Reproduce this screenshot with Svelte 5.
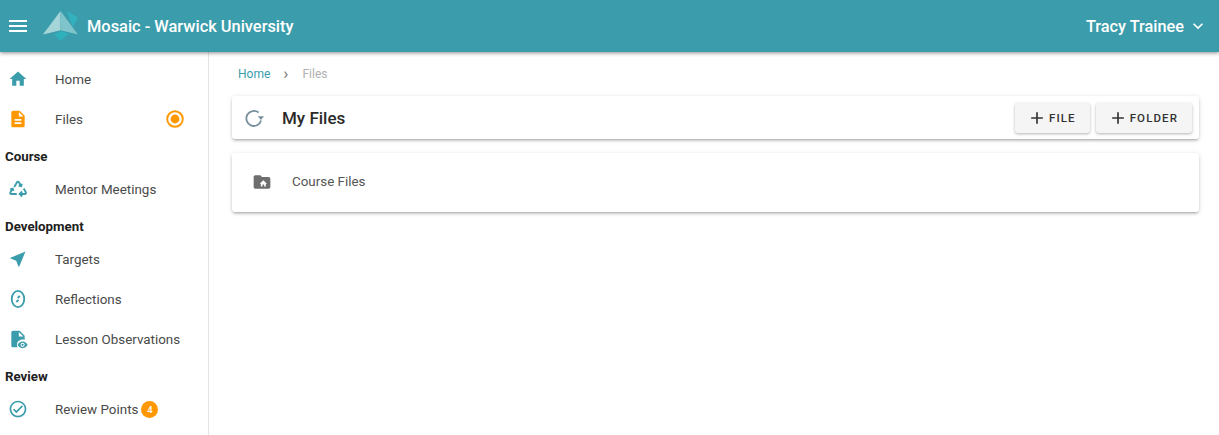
<script lang="ts">
  const icons = {
    home: 'M10 20v-6h4v6h5v-8h3L12 3 2 12h3v8z',
    file: 'M14 2H6c-1.1 0-2 .9-2 2v16c0 1.1.9 2 2 2h12c1.1 0 2-.9 2-2V8l-6-6zm2 16H8v-2h8v2zm0-4H8v-2h8v2zm-3-5V3.500L18.500 9H13z',
    send: 'M21 3 3 10.530v.98l6.840 2.650L12.480 21h.98L21 3z',
    check: 'M12 2C6.480 2 2 6.480 2 12s4.480 10 10 10 10-4.480 10-10S17.520 2 12 2zm0 18c-4.410 0-8-3.590-8-8s3.590-8 8-8 8 3.590 8 8-3.590 8-8 8zm-2-5.830-2.590-2.580L6 13l4 4 8-8-1.410-1.420z',
    plus: 'M19 13h-6v6h-2v-6H5v-2h6V5h2v6h6v2z'
  };
</script>

<div class="app">
  <header class="topbar">
    <svg class="burger" viewBox="0 0 24 24"><path d="M3 18h18v-2H3v2zm0-5h18v-2H3v2zm0-7v2h18V6H3z" /></svg>
    <svg class="logo" viewBox="0 0 36 30" preserveAspectRatio="none">
      <path d="M1 22 9 14 12 20z" fill="#5fb3ba" />
      <path d="M35 7 24 1l6 15z" fill="#33b1bf" />
      <path d="M12 23 18 29 26 22 18 20z" fill="#2fb0bd" />
      <path d="M18 1 1 23 18 19z" fill="#a5d5d8" />
      <path d="M18 1 35 23 18 19z" fill="#7fc4ca" />
    </svg>
    <span class="brand">Mosaic - Warwick University</span>
    <span class="user">Tracy Trainee</span>
    <svg class="caret" viewBox="0 0 24 24"><path d="M7.410 8.590 12 13.170l4.590-4.580L18 10l-6 6-6-6z" /></svg>
  </header>

  <div class="body">
    <nav class="side">
      <a class="item"><svg class="ico" viewBox="0 0 24 24"><path d={icons.home} /></svg><span>Home</span></a>
      <a class="item">
        <svg class="ico orange" viewBox="0 0 24 24"><path d={icons.file} /></svg><span>Files</span>
        <svg class="radio" viewBox="0 0 20 20"><circle cx="10" cy="10" r="7.800" fill="none" stroke="#ff9800" stroke-width="1.900" /><circle cx="10" cy="10" r="4.400" fill="#ff9800" /></svg>
      </a>
      <h4>Course</h4>
      <a class="item">
        <svg class="ico line" viewBox="0 0 24 24">
          <path d="M7.500 9.500 10.800 3.800c.5-.8 1.700-.8 2.200 0l2.600 4.300M12.800 7.800l3 .8.800-3" />
          <path d="M18.800 11.500l2.600 4.500c.5.900-.1 2-1.100 2h-5.500M17 15l-3 3 3 3" />
          <path d="M10.500 18H3.900c-1 0-1.600-1.100-1.100-2l2.700-4.600M2.600 12.400l3-.9.900 3" />
        </svg>
        <span>Mentor Meetings</span>
      </a>
      <h4>Development</h4>
      <a class="item"><svg class="ico" viewBox="0 0 24 24"><path d={icons.send} /></svg><span>Targets</span></a>
      <a class="item">
        <svg class="ico line" viewBox="0 0 24 24">
          <ellipse cx="12" cy="12" rx="7.500" ry="9.800" />
          <path d="M14.200 8.200 11.600 10.800M12.600 13 10 15.600" />
        </svg>
        <span>Reflections</span>
      </a>
      <a class="item">
        <svg class="ico" viewBox="0 0 24 24">
          <path d="M14 2H6c-1.100 0-2 .9-2 2v16c0 1.100.9 2 2 2h5.500c-.5-.9-.8-1.900-.8-3 0-3.700 3-6.500 6.800-6.500 1 0 2 .2 2.500.5V8l-6-6zm-1 7V3.500L18.500 9H13z" />
          <path d="M17.500 15c-2.700 0-5 1.700-6 4 1 2.300 3.300 4 6 4s5-1.700 6-4c-1-2.300-3.300-4-6-4zm0 6.500a2.500 2.500 0 1 1 0-5 2.500 2.500 0 0 1 0 5zm0-3.800a1.300 1.300 0 1 0 0 2.600 1.300 1.300 0 0 0 0-2.600z" />
        </svg>
        <span>Lesson Observations</span>
      </a>
      <h4>Review</h4>
      <a class="item"><svg class="ico" viewBox="0 0 24 24"><path d={icons.check} /></svg><span>Review Points</span><b class="badge">4</b></a>
    </nav>

    <main class="content">
      <div class="crumbs"><span class="crumb-link">Home</span><span class="sep">›</span><span class="crumb-here">Files</span></div>
      <section class="card toolbar">
        <svg class="refresh" viewBox="0 0 24 24">
          <path d="M17.500 5.500A9 9 0 1 0 20.500 15" fill="none" stroke="#78909c" stroke-width="2.200" />
          <path d="M16.500 10h7.500l-3.700 4.500z" fill="#78909c" />
        </svg>
        <h2>My Files</h2>
        <button><svg viewBox="0 0 24 24"><path d={icons.plus} /></svg>FILE</button>
        <button><svg viewBox="0 0 24 24"><path d={icons.plus} /></svg>FOLDER</button>
      </section>
      <section class="card row">
        <svg class="folder" viewBox="0 0 24 24">
          <path d="M20 6h-8l-2-2H4c-1.100 0-2 .9-2 2v12c0 1.100.9 2 2 2h16c1.100 0 2-.9 2-2V8c0-1.100-.9-2-2-2z" />
          <path class="house" d="M12.600 17.500v-2.500h2v2.500h2v-3.500h1.400L13.600 10l-4.400 4h1.400v3.500z" />
        </svg>
        <span>Course Files</span>
      </section>
    </main>
  </div>
</div>

<style>
  :global(body) { margin: 0; background: #fff; overflow: hidden; }
  .app { width: 1219px; height: 435px; overflow: hidden; font-family: Roboto, "Liberation Sans", sans-serif; color: #000; }

  .topbar {
    position: relative; z-index: 2; height: 52px; box-sizing: border-box;
    display: flex; align-items: center; padding: 0 11px 0 6px; color: #fff;
    background: #3b9dab; box-shadow: 0 1px 4px rgba(0, 0, 0, 0.45);
  }
  .burger { width: 24px; height: 24px; fill: #fff; }
  .logo { width: 37px; height: 32px; margin: 0 8px 0 12px; }
  .brand { font-size: 16.400px; font-weight: 500; }
  .user { margin-left: auto; font-size: 16.300px; font-weight: 500; }
  .caret { width: 20px; height: 20px; margin-left: 4px; fill: #fff; }

  .body { display: flex; height: 383px; }
  .side { width: 209px; flex: none; padding-top: 7px; box-sizing: border-box; border-right: 1px solid #e4e4e4; }
  .item { display: flex; align-items: center; height: 40px; font-size: 13.400px; color: #4a4a4a; }
  .ico { width: 20px; height: 20px; margin: 0 27px 0 8px; fill: #3b9dab; flex: none; }
  .ico.orange { fill: #ff9800; }
  .ico.line { fill: none; stroke: #3b9dab; stroke-width: 2.200; }
  .radio { width: 20px; height: 20px; margin-left: auto; margin-right: 23px; }
  .badge {
    width: 17px; height: 17px; margin-left: 3px; border-radius: 50%; background: #ff9800; color: #fff;
    font-size: 9.500px; font-weight: 500; display: flex; align-items: center; justify-content: center;
  }
  h4 { margin: 0; height: 30px; padding: 10px 0 0 5px; box-sizing: border-box; line-height: 16px; font-size: 13.300px; font-weight: 700; color: #212121; }

  .content { flex: 1; padding: 0 20px 0 23px; min-width: 0; }
  .crumbs { display: flex; align-items: center; height: 44px; font-size: 12px; padding-left: 6px; }
  .crumb-link { color: #3b9dab; }
  .sep { color: #777; margin: 0 14px 2px 13px; font-size: 17px; line-height: 1; }
  .crumb-here { color: #b0b0b0; }

  .card { background: #fff; border-radius: 3px; box-shadow: 0 2px 3px -1px rgba(0, 0, 0, 0.3), 0 1px 5px rgba(0, 0, 0, 0.14); }
  .toolbar { display: flex; align-items: center; height: 43px; padding: 0 7px 0 12px; gap: 6px; }
  .refresh { width: 20px; height: 20px; }
  h2 { margin: 0 auto 0 12px; font-size: 17px; font-weight: 500; color: #2a2a2a; }
  button {
    display: flex; align-items: center; justify-content: center; height: 30px; padding: 0 14px 0 12px; border: 0; border-radius: 3px;
    background: #f5f5f5; color: #333; font: 500 11.500px Roboto, sans-serif; letter-spacing: 1.100px;
    box-shadow: 0 1px 3px rgba(0, 0, 0, 0.3);
  }
  button svg { width: 20px; height: 20px; fill: #333; margin-right: 2px; }
  .row { display: flex; align-items: center; height: 59px; box-sizing: border-box; margin-top: 14px; padding: 0 0 2px 20px; font-size: 13.400px; color: #555; }
  .folder { width: 20px; height: 20px; fill: #6e6e6e; margin-right: 20px; }
  .house { fill: #fff; }
</style>
